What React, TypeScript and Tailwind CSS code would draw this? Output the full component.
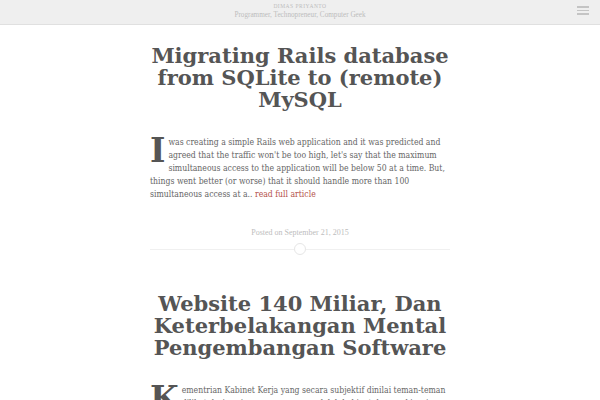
export default function App() {
  const serif = "font-['DejaVu_Serif',serif]";
  const body = "font-['DejaVu_Serif_Condensed','DejaVu_Serif',serif] text-[8.6px] leading-[13px] text-[#666]";
  return (
    <div className="min-h-[400px] bg-white">
      <header className="relative h-[25px] bg-[#efefef] border-b border-[#e0e0e0] flex flex-col items-center pt-[3px] font-['Liberation_Serif',serif] text-[#bdbdbd]">
        <div className="text-[5.5px] leading-[7px] tracking-[0.5px] uppercase">Dimas Priyanto</div>
        <div className="text-[7.2px] leading-[10px]">Programmer, Technopreneur, Computer Geek</div>
        <div className="absolute right-[11px] top-[6px] flex flex-col gap-[2px]">
          <span className="block w-[12px] h-[1.5px] bg-[#c4c4c4]" />
          <span className="block w-[12px] h-[1.5px] bg-[#c4c4c4]" />
          <span className="block w-[12px] h-[1.5px] bg-[#c4c4c4]" />
        </div>
      </header>

      <main className={`w-[300px] mx-auto ${serif}`}>
        <article className="pt-[20px]">
          <h1 className="text-center font-bold text-[21px] leading-[22px] text-[#555]">
            Migrating Rails database from SQLite to (remote) MySQL
          </h1>
          <p className={`mt-[25px] ${body}`}>
            <span className={`float-left ${serif} font-bold text-[33px] leading-[26px] mt-[2px] mr-[3px] text-[#555]`}>I</span>
            was creating a simple Rails web application and it was predicted and agreed that the traffic won't be too high, let's say that the maximum simultaneous access to the application will be below 50 at a time. But, things went better (or worse) that it should handle more than 100 simultaneous access at a..{" "}
            <a className="text-[#b5524a]">read full article</a>
          </p>
          <div className="mt-[26px] text-center font-['Liberation_Serif',serif] text-[8px] leading-[12px] text-[#bdbdbd]">
            Posted on September 21, 2015
          </div>
          <div className="mt-[4px] flex items-center h-[12px]">
            <div className="flex-1 h-px bg-[#f0f0f0]" />
            <div className="w-[12px] h-[12px] rounded-full border border-[#e6e6e6]" />
            <div className="flex-1 h-px bg-[#f0f0f0]" />
          </div>
        </article>

        <article className="pt-[38px]">
          <h1 className="text-center font-bold text-[21px] leading-[22px] text-[#555]">
            Website 140 Miliar, Dan Keterbelakangan Mental Pengembangan Software
          </h1>
          <p className={`mt-[25px] ${body}`}>
            <span className={`float-left ${serif} font-bold text-[33px] leading-[26px] mt-[2px] mr-[3px] text-[#555]`}>K</span>
            ementrian Kabinet Kerja yang secara subjektif dinilai teman-teman dilihat dari segi apapun memang adalah kabinet dengan kinerja yang tidak terlalu buruk, setidaknya begitulah kata orang.
          </p>
        </article>
      </main>
    </div>
  );
}
